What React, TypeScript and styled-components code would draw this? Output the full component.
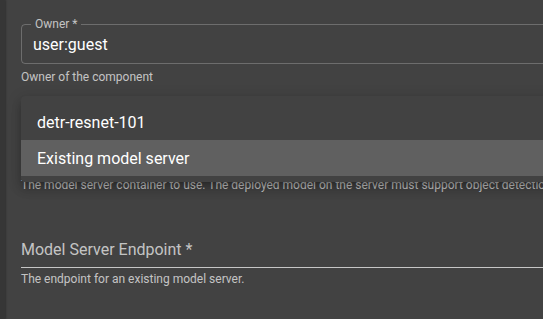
import React from "react";
import styled, { createGlobalStyle } from "styled-components";

const Global = createGlobalStyle`
  html, body { margin: 0; padding: 0; background: #424242; overflow: hidden; }
  body { font-family: Roboto, "Liberation Sans", sans-serif; }
  #root { width: 543px; height: 319px; }
`;

const Page = styled.div`
  display: flex;
  width: 543px;
  height: 319px;
  background: #424242;
  overflow: hidden;
`;

const Strip = styled.div`
  width: 5px;
  flex: none;
  background: #363636;
  box-shadow: 1px 0 2px rgba(0, 0, 0, 0.25);
`;

const Main = styled.div`
  position: relative;
  flex: 1;
  padding: 24px 0 0 16px;
  min-width: 0;
`;

const Form = styled.div`
  width: 700px;
  display: flex;
  flex-direction: column;
`;

const Outlined = styled.div`
  position: relative;
  height: 40px;
  box-sizing: border-box;
  border: 1px solid rgba(255, 255, 255, 0.23);
  border-radius: 4px;
  display: flex;
  align-items: center;
  padding-left: 11px;
  font-size: 16px;
  color: #fff;
`;

const OutlinedLabel = styled.span`
  position: absolute;
  top: -8px;
  left: 9px;
  padding: 0 4px;
  background: #424242;
  font-size: 12px;
  line-height: 14px;
  color: rgba(255, 255, 255, 0.7);
`;

const Helper = styled.div<{ $mt?: number }>`
  margin-top: ${(p) => p.$mt ?? 3}px;
  font-size: 12px;
  line-height: 20px;
  color: rgba(255, 255, 255, 0.7);
  white-space: nowrap;
`;

const SelectSpace = styled.div`
  height: 85px;
`;

const StandardField = styled.div`
  margin-top: 45px;
  display: flex;
  flex-direction: column;
`;

const StandardLabel = styled.div`
  font-size: 16px;
  line-height: 20px;
  color: rgba(255, 255, 255, 0.7);
`;

const Underline = styled.div`
  height: 8px;
  box-sizing: border-box;
  border-bottom: 1px solid rgba(255, 255, 255, 0.7);
`;

const Menu = styled.ul`
  position: absolute;
  top: 96px;
  left: 16px;
  width: 700px;
  height: 86px;
  margin: 0;
  padding: 8px 0 0;
  box-sizing: border-box;
  list-style: none;
  background: #424242;
  border-radius: 4px;
  overflow: hidden;
  box-shadow: 0 5px 5px -3px rgba(0, 0, 0, 0.2), 0 8px 10px 1px rgba(0, 0, 0, 0.14),
    0 3px 14px 2px rgba(0, 0, 0, 0.12);
`;

const Item = styled.li<{ $selected?: boolean }>`
  height: 36px;
  display: flex;
  align-items: center;
  padding-left: 16px;
  font-size: 16px;
  color: #fff;
  background: ${(p) => (p.$selected ? "rgba(255,255,255,0.16)" : "transparent")};
`;

export default function App() {
  return (
    <Page>
      <Global />
      <Strip />
      <Main>
        <Form>
          <Outlined>
            <OutlinedLabel>Owner *</OutlinedLabel>
            user:guest
          </Outlined>
          <Helper>Owner of the component</Helper>
          <SelectSpace />
          <Helper>
            The model server container to use. The deployed model on the server must support object detection.
          </Helper>
          <StandardField>
            <StandardLabel>Model Server Endpoint *</StandardLabel>
            <Underline />
            <Helper $mt={1}>The endpoint for an existing model server.</Helper>
          </StandardField>
        </Form>
        <Menu>
          <Item>detr-resnet-101</Item>
          <Item $selected>Existing model server</Item>
        </Menu>
      </Main>
    </Page>
  );
}
